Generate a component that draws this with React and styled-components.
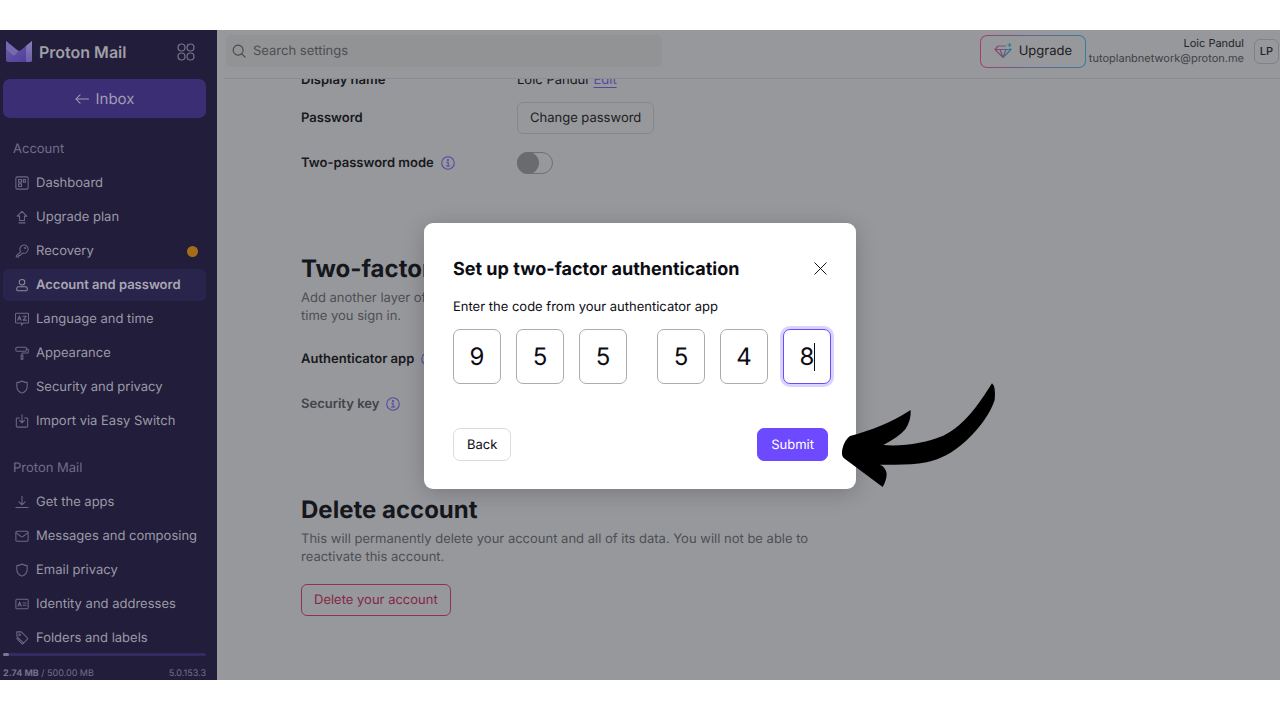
import { useState } from 'react';
import styled, { createGlobalStyle } from 'styled-components';

const GlobalStyle = createGlobalStyle`
  * {
    box-sizing: border-box;
  }

  body {
    margin: 0;
    background: #ffffff;
    font-family: Inter, "Liberation Sans", sans-serif;
    font-size: 13px;
    line-height: 18px;
    color: #15161a;
    text-rendering: geometricPrecision;
  }

  button,
  input {
    font: inherit;
    text-rendering: inherit;
  }

  h1, h2, p, ul {
    margin: 0;
    padding: 0;
  }
`

const Page = styled.div`
  height: 100vh;
  padding: 30px 0;
`

const Frame = styled.div`
  position: relative;
  display: flex;
  height: 100%;
  overflow: hidden;
  background: #97989c;
`

/* ---------- sidebar ---------- */

const Sidebar = styled.aside`
  display: flex;
  flex-direction: column;
  flex: 0 0 217px;
  padding: 0 11px 0 3px;
  background: #211d3b;
  color: #9c9aa7;
`

const SidebarTop = styled.div`
  display: flex;
  align-items: center;
  justify-content: space-between;
  flex-shrink: 0;
  height: 43px;
  padding: 0 11px 0 3px;
`

const Brand = styled.a`
  display: flex;
  align-items: center;
  gap: 7px;
  color: #a09fa8;
  font-size: 16px;
  font-weight: 600;
  text-decoration: none;
`

const AppsButton = styled.button`
  display: flex;
  padding: 0;
  border: none;
  background: transparent;
  color: #77748b;
  cursor: pointer;
`

const InboxButton = styled.button`
  display: flex;
  align-items: center;
  justify-content: center;
  flex-shrink: 0;
  gap: 7px;
  height: 39px;
  margin: 6px 0 14px;
  border: none;
  border-radius: 7px;
  background: #3c2e74;
  color: #a09cb3;
  font-size: 15px;
  cursor: pointer;
`

const Nav = styled.nav`
  flex: 1;
  min-height: 0;
  overflow: hidden;
`

const NavTitle = styled.h2`
  padding-left: 10px;
  font-size: 13px;
  font-weight: 400;
  line-height: 34px;
  color: #716d8a;
`

const NavList = styled.ul`
  display: flex;
  flex-direction: column;
  gap: 2px;
  padding: 1px 0;
  margin-bottom: 13px;
  list-style: none;
`

const NavLink = styled.a`
  display: flex;
  align-items: center;
  gap: 7px;
  height: 32px;
  padding: 0 8px 0 12px;
  border-radius: 6px;
  background: ${({ $active }) => ($active ? '#29244b' : 'transparent')};
  color: ${({ $active }) => ($active ? '#a9a7b3' : '#9c9aa7')};
  font-weight: ${({ $active }) => ($active ? 600 : 400)};
  text-decoration: none;

  svg {
    color: ${({ $active }) => ($active ? '#8f8ca0' : '#6c6985')};
  }
`

const Dot = styled.span`
  width: 11px;
  height: 11px;
  margin-left: auto;
  border-radius: 50%;
  background: #a56c19;
`

const StorageBar = styled.div`
  flex-shrink: 0;
  height: 3px;
  border-radius: 2px;
  background: #342b63;
`

const StorageFill = styled.div`
  height: 100%;
  border-radius: 2px;
  background: #7a7792;
`

const StorageInfo = styled.div`
  display: flex;
  justify-content: space-between;
  flex-shrink: 0;
  padding: 12px 0 0;
  font-size: 9px;
  line-height: 12px;
  color: #74718a;
`

/* ---------- main ---------- */

const Main = styled.main`
  display: flex;
  flex-direction: column;
  flex: 1;
  min-width: 0;
`

const Header = styled.header`
  display: flex;
  align-items: center;
  flex-shrink: 0;
  height: 49px;
  margin-left: 7px;
  padding: 0 1px 6px 2px;
  border-bottom: 1px solid #8b8c91;
`

const SearchBox = styled.label`
  display: flex;
  align-items: center;
  gap: 7px;
  flex: 0 1 436px;
  height: 32px;
  padding-left: 6px;
  border-radius: 6px;
  background: #929394;
  color: #45464b;
`

const SearchInput = styled.input`
  flex: 1;
  min-width: 0;
  padding: 0;
  border: none;
  outline: none;
  background: transparent;
  color: #15161a;

  &::placeholder {
    color: #4d4e53;
    opacity: 1;
  }
`

const UpgradeButton = styled.button`
  display: flex;
  align-items: center;
  justify-content: center;
  gap: 7px;
  width: 106px;
  height: 33px;
  margin-left: auto;
  padding: 0;
  border: 1px solid transparent;
  border-radius: 7px;
  background:
    linear-gradient(#97989c, #97989c) padding-box,
    linear-gradient(90deg, #a34168, #67608f 40%, #337f9b) border-box;
  color: #1b1c20;
  cursor: pointer;
`

const User = styled.div`
  margin: 0 10px 0 3px;
  font-size: 11px;
  line-height: 15px;
  text-align: right;
  color: #222328;
`

const UserMail = styled.div`
  color: #3f4045;
`

const Avatar = styled.button`
  width: 25px;
  height: 25px;
  padding: 0;
  border: 1px solid #818287;
  border-radius: 6px;
  background: transparent;
  color: #222328;
  font-size: 11px;
  line-height: 11px;
  font-weight: 500;
`

const Content = styled.div`
  flex: 1;
  min-height: 0;
  padding: 0 84px;
  overflow: hidden;
`

const Scrolled = styled.div`
  display: flex;
  flex-direction: column;
  gap: 72px;
  margin-top: -8px;
`

const Section = styled.section`
  max-width: 516px;
`

const SectionTitle = styled.h2`
  padding-top: 2px;
  margin-bottom: 4px;
  font-size: 24px;
  line-height: 32px;
  font-weight: 700;
  color: #15171c;
  white-space: nowrap;
`

const SectionText = styled.p`
  margin-bottom: 18px;
  color: #4d4e53;
`

const Rows = styled.div`
  display: flex;
  flex-direction: column;
  gap: 13px;
`

const Row = styled.div`
  display: flex;
  align-items: center;
  min-height: ${({ $compact }) => ($compact ? 18 : 32)}px;
`

const RowLabel = styled.label`
  display: flex;
  align-items: center;
  gap: 7px;
  flex: 0 0 216px;
  font-weight: 600;
  color: ${({ $muted }) => ($muted ? '#424348' : '#17181c')};

  svg {
    color: #5347a3;
  }
`

const EditLink = styled.a`
  margin-left: 5px;
  color: #5347a3;
  text-decoration: underline;
  text-underline-offset: 3px;
`

const OutlineButton = styled.button`
  height: 32px;
  padding: 0 12px;
  border: 1px solid ${({ $danger }) => ($danger ? '#913350' : '#86878b')};
  border-radius: 6px;
  background: transparent;
  color: ${({ $danger }) => ($danger ? '#842743' : '#1b1c20')};
  cursor: pointer;
`

const Toggle = styled.input`
  display: flex;
  appearance: none;
  width: 36px;
  height: 22px;
  margin: 0;
  border: 1px solid #6f7074;
  border-radius: 11px;
  cursor: pointer;

  &::before {
    content: '';
    width: 22px;
    height: 22px;
    margin: -1px;
    border-radius: 50%;
    background: #6b6b6e;
  }
`

/* ---------- dialog ---------- */

const Backdrop = styled.div`
  position: absolute;
  inset: 0;
  display: flex;
  align-items: center;
  justify-content: center;
  padding-top: 2px;
`

const Dialog = styled.form`
  position: relative;
  width: 432px;
  padding: 28px 28px 28px 29px;
  border-radius: 9px;
  background: #ffffff;
  box-shadow: 0 4px 22px rgba(0, 0, 0, 0.2);
  color: #0c0c14;
`

const DialogHeader = styled.div`
  display: flex;
  align-items: center;
  justify-content: space-between;
  height: 34px;
  margin-bottom: 13px;
`

const DialogTitle = styled.h1`
  padding-top: 3px;
  font-size: 18px;
  line-height: 24px;
  font-weight: 700;
`

const CloseButton = styled.button`
  display: flex;
  padding: 1px;
  border: none;
  background: transparent;
  color: #0c0c14;
  cursor: pointer;
`

const Codes = styled.div`
  display: flex;
  gap: 15px;
  margin-top: 13px;
`

const CodeBox = styled.div`
  position: relative;
  flex: 0 0 48px;
  height: 55px;

  &:nth-child(4) {
    margin-left: 15px;
  }
`

const CodeInput = styled.input`
  width: 100%;
  height: 100%;
  padding: 0;
  border: 1px solid ${({ $current }) => ($current ? '#6d4aff' : '#adabb0')};
  border-radius: 7px;
  outline: none;
  background: #ffffff;
  box-shadow: ${({ $current }) => ($current ? '0 0 0 3px #dad2ff' : 'none')};
  color: #0c0c14;
  font-size: 24px;
  text-align: center;
`

const Caret = styled.span`
  position: absolute;
  top: 14px;
  left: 31px;
  width: 1px;
  height: 28px;
  background: #0c0c14;
`

const DialogFooter = styled.div`
  display: flex;
  justify-content: space-between;
  margin-top: 44px;
`

const DialogButton = styled.button`
  height: 33px;
  padding: 0 13px;
  border: 1px solid ${({ $primary }) => ($primary ? '#6d4aff' : '#dcdbdf')};
  border-radius: 7px;
  background: ${({ $primary }) => ($primary ? '#6d4aff' : '#ffffff')};
  color: ${({ $primary }) => ($primary ? '#ffffff' : '#0c0c14')};
  cursor: pointer;
`

const Arrow = styled.svg`
  position: absolute;
  top: 147px;
  left: 396px;
  pointer-events: none;
`

/* ---------- icons ---------- */

const icons = {
  dashboard: (
    <>
      <rect x="1" y="1" width="14" height="14" rx="1.5" />
      <path d="M4 4h3.500v3H4zM9.500 4h2.500v3H9.500zM4 9h3.500v3H4z" />
    </>
  ),
  upgrade: <path d="M8 1.500 2.500 7h2.700v5h5.600V7h2.700zM4.500 14.700h7" />,
  key: (
    <>
      <path d="M6.600 8.800 1.500 13.300v1.500h2.700V13H6l2.600-2.700A4.700 4.700 0 1 0 6.600 8.800z" />
      <circle cx="11.500" cy="4.500" r=".6" />
    </>
  ),
  user: (
    <>
      <circle cx="8" cy="4.800" r="3.200" />
      <path d="M4 10h8a2 2 0 0 1 2 2v1.500a1 1 0 0 1-1 1H3a1 1 0 0 1-1-1V12a2 2 0 0 1 2-2z" />
    </>
  ),
  language: (
    <>
      <path d="M1.500 1.500h13a1 1 0 0 1 1 1v9a1 1 0 0 1-1 1H9.500L7.500 15v-2.500h-6a1 1 0 0 1-1-1v-9a1 1 0 0 1 1-1z" />
      <path d="M3 9.500 5 4.500l2 5M3.700 8h2.600M9 4.800h4L9.300 9.300H13.300" />
    </>
  ),
  roller: (
    <>
      <rect x="1" y="1.500" width="12" height="4.500" rx="1.200" />
      <path d="M13 3.500h1.200a1 1 0 0 1 1 1v2.500a1 1 0 0 1-1 1H9a1 1 0 0 0-1 1v1.500M7 10.500h2v4.500H7z" />
    </>
  ),
  shield: <path d="M8 1.200c1.800 1.100 3.800 1.700 5.900 1.800v4c0 3.700-2.200 6.500-5.900 8-3.700-1.500-5.900-4.300-5.900-8V3C4.200 2.900 6.200 2.300 8 1.200z" />,
  importBox: <path d="M5 4.500H2.500a1 1 0 0 0-1 1V14a1 1 0 0 0 1 1h11a1 1 0 0 0 1-1V5.500a1 1 0 0 0-1-1H11M8 .8V10M5.200 7.300 8 10l2.800-2.700" />,
  download: <path d="M8 1.500v9.500M4.500 7.800 8 11.200l3.500-3.400M1 14.300h14" />,
  mail: (
    <>
      <rect x="1" y="2.500" width="14" height="11.500" rx="1.200" />
      <path d="m1.500 4.500 5.500 4.200a1.600 1.600 0 0 0 2 0l5.500-4.200" />
    </>
  ),
  card: (
    <>
      <rect x="1" y="2.500" width="14" height="11" rx="1.200" />
      <path d="m3.500 10.500 1.800-4.800 1.800 4.800M4.200 9h2.200M9.200 6.800h3.500M9.200 9.500h3.500" />
    </>
  ),
  tags: (
    <>
      <path d="M2 1h5.200l7 7a1 1 0 0 1 0 1.400l-4.400 4.400L2.300 6.300z" />
      <path d="M2 8.500 8.300 15l1.500-1.200" />
      <circle cx="5.300" cy="4.300" r=".9" />
    </>
  ),
  search: (
    <>
      <circle cx="7" cy="7" r="5.700" />
      <path d="m11.200 11.200 3.800 3.800" />
    </>
  ),
  info: (
    <>
      <circle cx="8" cy="8" r="7.200" />
      <path d="M6.600 7.200h1.600v4M6.200 11.400h3.800" />
      <circle cx="8" cy="4.700" r=".6" />
    </>
  ),
  close: <path d="m1 1 14 14M15 1 1 15" />,
  back: <path d="M15.500 8H1M5.800 3.200 1 8l4.800 4.800" />,
}

function Icon({ name, size = 14 }) {
  return (
    <svg
      width={size}
      height={size}
      viewBox="0 0 16 16"
      fill="none"
      stroke="currentColor"
      strokeWidth="1.2"
      strokeLinecap="round"
      strokeLinejoin="round"
      aria-hidden="true"
    >
      {icons[name]}
    </svg>
  );
}

function MailLogo() {
  return (
    <svg width="26" height="21" viewBox="0 0 26 21" aria-hidden="true">
      <defs>
        <linearGradient id="mailSide" x1="0" y1="0" x2="0" y2="1">
          <stop offset="0" stopColor="#8a80b8" />
          <stop offset="1" stopColor="#6a5da8" />
        </linearGradient>
        <linearGradient id="mailFront" x1="0" y1="0" x2="1" y2="1">
          <stop offset="0" stopColor="#6d5ea8" />
          <stop offset="1" stopColor="#4c3b99" />
        </linearGradient>
      </defs>
      <path d="M0 0 11 9a3 3 0 0 0 4 0L26 0v19a2 2 0 0 1-2 2H2a2 2 0 0 1-2-2z" fill="url(#mailFront)" />
      <path d="M20 5 26 0v19a2 2 0 0 1-2 2h-4z" fill="url(#mailSide)" />
      <path d="M0 0 11 9q1 .8 2 .7L9 14Q7.500 15 6 13.500L0 8z" fill="#7669ae" />
    </svg>
  );
}

function Gem() {
  return (
    <svg width="18" height="16" viewBox="0 0 18 16" fill="none" strokeWidth="1.200" strokeLinejoin="round" aria-hidden="true">
      <defs>
        <linearGradient id="gem" x1="0" y1="0" x2="1" y2="0">
          <stop offset="0" stopColor="#9c3e68" />
          <stop offset="1" stopColor="#2c7891" />
        </linearGradient>
      </defs>
      <path d="M12 3H4L1 6.500l8 8 8-8-1-1M1 6.500h16M6 6.500l3 8 3-8" stroke="url(#gem)" />
      <path d="M15.500 0v4M13.500 2h4" stroke="#2c7f87" />
    </svg>
  );
}

const accountLinks = [
  { icon: 'dashboard', text: 'Dashboard' },
  { icon: 'upgrade', text: 'Upgrade plan' },
  { icon: 'key', text: 'Recovery', dot: true },
  { icon: 'user', text: 'Account and password', active: true },
  { icon: 'language', text: 'Language and time' },
  { icon: 'roller', text: 'Appearance' },
  { icon: 'shield', text: 'Security and privacy' },
  { icon: 'importBox', text: 'Import via Easy Switch' },
]

const mailLinks = [
  { icon: 'download', text: 'Get the apps' },
  { icon: 'mail', text: 'Messages and composing' },
  { icon: 'shield', text: 'Email privacy' },
  { icon: 'card', text: 'Identity and addresses' },
  { icon: 'tags', text: 'Folders and labels' },
]

function NavGroup({ title, links }) {
  return (
    <>
      <NavTitle>{title}</NavTitle>
      <NavList>
        {links.map(({ icon, text, dot, active }) => (
          <li key={text}>
            <NavLink href="#" $active={active}>
              <Icon name={icon} />
              {text}
              {dot && <Dot />}
            </NavLink>
          </li>
        ))}
      </NavList>
    </>
  );
}

function TwoFactorDialog() {
  const [code, setCode] = useState(['9', '5', '5', '5', '4', '8']);

  const changeDigit = (index, value) => {
    setCode(code.map((digit, i) => (i === index ? value : digit)));
  }

  return (
    <Backdrop>
      <Dialog role="dialog" aria-labelledby="dialogTitle" onSubmit={e => e.preventDefault()}>
        <DialogHeader>
          <DialogTitle id="dialogTitle">Set up two-factor authentication</DialogTitle>
          <CloseButton type="button" aria-label="Close">
            <Icon name="close" size={13} />
          </CloseButton>
        </DialogHeader>

        <p>Enter the code from your authenticator app</p>

        <Codes>
          {code.map((digit, index) => (
            <CodeBox key={index}>
              <CodeInput
                aria-label={`Digit ${index + 1}`}
                maxLength={1}
                value={digit}
                $current={index === 5}
                onChange={e => changeDigit(index, e.target.value)}
              />
              {index === 5 && <Caret />}
            </CodeBox>
          ))}
        </Codes>

        <DialogFooter>
          <DialogButton type="button">Back</DialogButton>
          <DialogButton type="submit" $primary>Submit</DialogButton>
        </DialogFooter>

        <Arrow width="190" height="130" viewBox="0 0 570 390" aria-hidden="true">
          <path d="M516 40Q528 50 524 90Q505 148 440 211C395 252 360 268 320 277C275 286 230 284 180 284Q198 292 200 312Q200 330 188 351L72 265Q63 257 67 238Q73 210 90 198C150 182 210 160 272 120Q274 150 256 178Q238 200 190 225C250 230 320 218 370 197C435 165 475 105 516 40Z" />
        </Arrow>
      </Dialog>
    </Backdrop>
  );
}

export default function App() {
  return (
    <Page>
      <GlobalStyle />
      <Frame>
        <Sidebar>
          <SidebarTop>
            <Brand href="#">
              <MailLogo />
              Proton Mail
            </Brand>
            <AppsButton aria-label="Apps">
              <svg width="18" height="18" viewBox="0 0 18 18" fill="none" stroke="currentColor" strokeWidth="1.200">
                <circle cx="4.500" cy="4.500" r="3.500" />
                <circle cx="13.500" cy="4.500" r="3.500" />
                <circle cx="4.500" cy="13.500" r="3.500" />
                <circle cx="13.500" cy="13.500" r="3.500" />
              </svg>
            </AppsButton>
          </SidebarTop>

          <InboxButton>
            <Icon name="back" />
            Inbox
          </InboxButton>

          <Nav>
            <NavGroup title="Account" links={accountLinks} />
            <NavGroup title="Proton Mail" links={mailLinks} />
          </Nav>

          <StorageBar>
            <StorageFill style={{ width: `${(15 / 500) * 100}%` }} />
          </StorageBar>
          <StorageInfo>
            <span><b>2.74 MB</b> / 500.00 MB</span>
            <span>5.0.153.3</span>
          </StorageInfo>
        </Sidebar>

        <Main>
          <Header>
            <SearchBox>
              <Icon name="search" />
              <SearchInput type="search" placeholder="Search settings" aria-label="Search settings" />
            </SearchBox>
            <UpgradeButton>
              <Gem />
              Upgrade
            </UpgradeButton>
            <User>
              <div>Loic Pandul</div>
              <UserMail>tutoplanbnetwork@proton.me</UserMail>
            </User>
            <Avatar>LP</Avatar>
          </Header>

          <Content>
            <Scrolled>
              <Section>
                <Rows>
                  <Row $compact>
                    <RowLabel as="span">Display name</RowLabel>
                    <span>Loic Pandul</span>
                    <EditLink href="#">Edit</EditLink>
                  </Row>
                  <Row>
                    <RowLabel htmlFor="changePassword">Password</RowLabel>
                    <OutlineButton id="changePassword">Change password</OutlineButton>
                  </Row>
                  <Row>
                    <RowLabel htmlFor="twoPassword">
                      Two-password mode
                      <Icon name="info" />
                    </RowLabel>
                    <Toggle type="checkbox" role="switch" id="twoPassword" />
                  </Row>
                </Rows>
              </Section>

              <Section>
                <SectionTitle>Two-factor authentication</SectionTitle>
                <SectionText>
                  Add another layer of security to your account. You’ll need to verify yourself each time you sign in.
                </SectionText>
                <Rows>
                  <Row>
                    <RowLabel as="span">
                      Authenticator app
                      <Icon name="info" />
                    </RowLabel>
                  </Row>
                  <Row>
                    <RowLabel as="span" $muted>
                      Security key
                      <Icon name="info" />
                    </RowLabel>
                  </Row>
                </Rows>
              </Section>

              <Section>
                <SectionTitle>Delete account</SectionTitle>
                <SectionText>
                  This will permanently delete your account and all of its data. You will not be able to reactivate this account.
                </SectionText>
                <OutlineButton $danger>Delete your account</OutlineButton>
              </Section>
            </Scrolled>
          </Content>
        </Main>

        <TwoFactorDialog />
      </Frame>
    </Page>
  );
}
